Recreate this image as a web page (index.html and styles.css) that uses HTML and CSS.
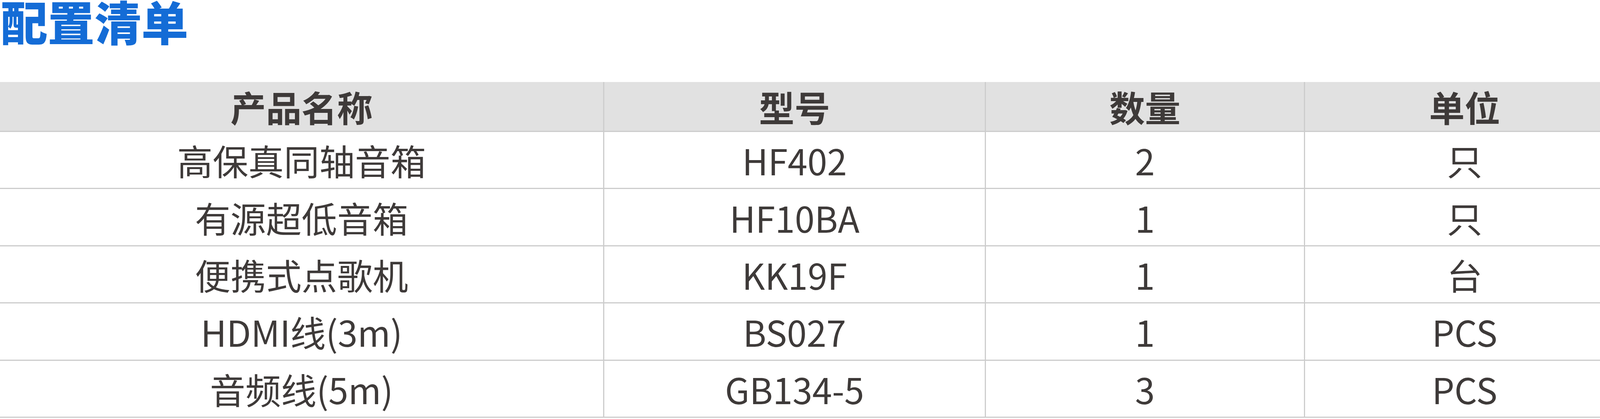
FILE: index.html
```html
<!DOCTYPE html>
<html lang="zh-CN">
<head>
<meta charset="utf-8">
<title>配置清单</title>
<link rel="stylesheet" href="styles.css">
</head>
<body>
<h1 class="title">配置清单</h1>
<div class="table">
  <div class="row head">
    <div class="cell">产品名称</div>
    <div class="cell">型号</div>
    <div class="cell">数量</div>
    <div class="cell">单位</div>
  </div>
  <div class="row">
    <div class="cell">高保真同轴音箱</div>
    <div class="cell">HF402</div>
    <div class="cell">2</div>
    <div class="cell">只</div>
  </div>
  <div class="row">
    <div class="cell">有源超低音箱</div>
    <div class="cell">HF10BA</div>
    <div class="cell">1</div>
    <div class="cell">只</div>
  </div>
  <div class="row">
    <div class="cell">便携式点歌机</div>
    <div class="cell">KK19F</div>
    <div class="cell">1</div>
    <div class="cell">台</div>
  </div>
  <div class="row">
    <div class="cell">HDMI线(3m)</div>
    <div class="cell">BS027</div>
    <div class="cell">1</div>
    <div class="cell">PCS</div>
  </div>
  <div class="row">
    <div class="cell">音频线(5m)</div>
    <div class="cell">GB134-5</div>
    <div class="cell">3</div>
    <div class="cell">PCS</div>
  </div>
</div>
</body>
</html>
```

FILE: styles.css
```css
html, body {
  margin: 0;
  padding: 0;
  background: #ffffff;
}

body {
  font-family: "Noto Sans CJK SC", "Noto Sans", sans-serif;
  color: #3e3a39;
}

.title {
  margin: 0 0 103px 2px;
  font-size: 120px;
  line-height: 107px;
  font-weight: 900;
  color: #146cd6;
}

.table {
  width: 4158px;
}

.row {
  display: grid;
  grid-template-columns: 1544px 977px 817px 820px;
  height: 146.4px;
  box-sizing: border-box;
  border-bottom: 3px solid #cccccc;
}

.row.head {
  height: 128px;
  background: #e1e1e1;
  font-weight: 700;
}

.cell {
  display: flex;
  align-items: center;
  justify-content: center;
  font-size: 91px;
  line-height: 1;
  border-left: 3px solid #cdcdcd;
}

.cell:first-child {
  border-left: none;
}
```
